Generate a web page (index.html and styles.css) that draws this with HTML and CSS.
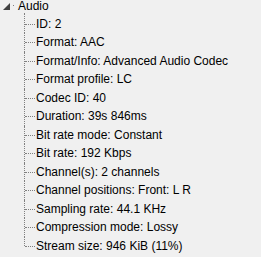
FILE: index.html
```html
<!DOCTYPE html>
<html>
<head>
<meta charset="utf-8">
<link rel="stylesheet" href="styles.css">
</head>
<body>
<div class="tree">
  <div class="node">
    <div class="head">
      <span class="toggle"><svg width="7" height="7" viewBox="0 0 7 7"><path d="M7 0 L7 7 L0 7 Z" fill="#404040"/></svg></span>
      <span class="hdot"></span>
      <span class="label">Audio</span>
    </div>
    <ul class="children">
      <li>ID: 2</li>
      <li>Format: AAC</li>
      <li>Format/Info: Advanced Audio Codec</li>
      <li>Format profile: LC</li>
      <li>Codec ID: 40</li>
      <li>Duration: 39s 846ms</li>
      <li>Bit rate mode: Constant</li>
      <li>Bit rate: 192 Kbps</li>
      <li>Channel(s): 2 channels</li>
      <li>Channel positions: Front: L R</li>
      <li>Sampling rate: 44.1 KHz</li>
      <li>Compression mode: Lossy</li>
      <li>Stream size: 946 KiB (11%)</li>
    </ul>
  </div>
</div>
</body>
</html>
```
FILE: styles.css
```css
html, body {
  margin: 0;
  padding: 0;
  background: #f0f0f0;
}
body {
  font-family: "Liberation Sans", Arial, sans-serif;
  font-size: 12px;
  color: #000;
  overflow: hidden;
}
.tree {
  margin-top: -3.5px;
}
.head {
  height: 18px;
  line-height: 18px;
  display: flex;
  align-items: center;
}
.toggle {
  display: flex;
  margin-left: 3px;
  width: 7px;
  height: 7px;
  margin-top: 1px;
}
.hdot {
  width: 1px;
  height: 1px;
  background: #808080;
  margin-left: 3px;
}
.label {
  margin-left: 4px;
}
.children {
  list-style: none;
  margin: 0;
  padding: 0 0 0 24px;
}
.children li {
  position: relative;
  height: 18.5px;
  line-height: 18.5px;
  padding-left: 12px;
  white-space: nowrap;
}
.children li::before {
  content: "";
  position: absolute;
  left: 0;
  top: 0;
  height: 100%;
  border-left: 1px dotted #808080;
}
.children li:first-child::before {
  top: -1.5px;
  height: calc(100% + 1.5px);
}
.children li:last-child::before {
  height: 50%;
}
.children li::after {
  content: "";
  position: absolute;
  left: 1px;
  top: 50%;
  width: 10px;
  border-top: 1px dotted #808080;
}
```
